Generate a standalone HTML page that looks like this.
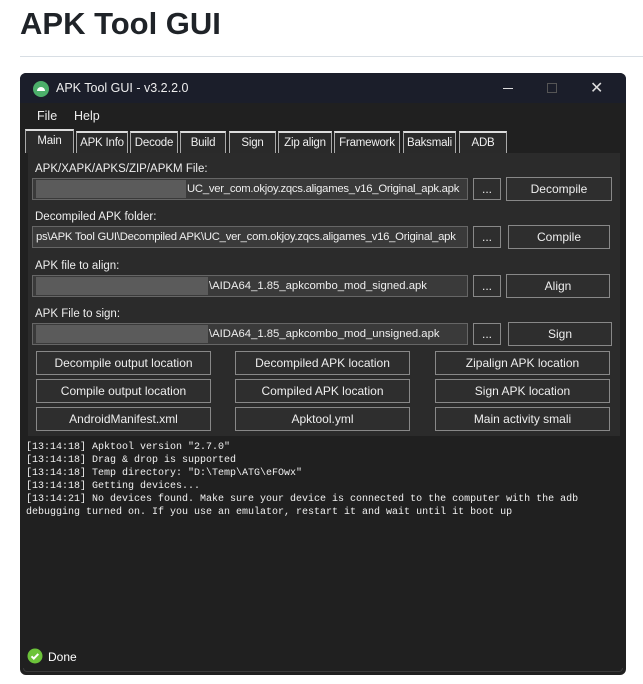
<!DOCTYPE html>
<html><head><style>
body{margin:0;width:643px;height:684px;background:#fff;font-family:"Liberation Sans",sans-serif;position:relative;overflow:hidden}
.a{position:absolute}
h1{position:absolute;left:20px;top:6px;margin:0;font-size:31px;font-weight:bold;color:#1f2328}
.hr{left:20px;top:56px;width:623px;height:1px;background:#d8dee4}
.win{left:20px;top:73px;width:606px;height:602px;background:#202020;border-radius:6px;overflow:hidden;color:#eee;font-size:12px}
.tb{left:0;top:0;width:606px;height:30px;background:#1b1e2a}
.tab{position:absolute;top:58px;height:22px;border:1px solid #aaa;border-bottom:none;background:#2a2a2a;color:#eee;font-size:11.5px;text-align:center;line-height:21px;box-sizing:border-box;border-top:2px solid #ddd;white-space:nowrap;letter-spacing:-0.2px}
.panel{left:8px;top:80px;width:592px;height:283px;background:#2b2b2b}
.lbl{position:absolute;font-size:11.5px;color:#eee}
.in{position:absolute;height:22px;background:#3a3a3a;border:1px solid #666;box-sizing:border-box;font-size:11.3px;line-height:20px;color:#eee;white-space:nowrap;overflow:hidden}
.blur{position:absolute;top:1px;height:18px;background:#5b5b5b}
.btn{position:absolute;background:#2e2e2e;border:1px solid #888;box-sizing:border-box;text-align:center;font-size:12px;color:#eee}
.log{left:6px;top:368px;font-family:"Liberation Mono",monospace;font-size:10px;line-height:13px;color:#f0f0f0;white-space:pre}
</style></head><body>
<h1>APK Tool GUI</h1>
<div class="a hr"></div>
<div class="a win">
 <div class="a tb"></div>
 <svg class="a" style="left:13px;top:8px" width="16" height="16"><circle cx="8" cy="8" r="8" fill="#4caf6a"/><path d="M4 10a4 4 0 0 1 8 0z" fill="#fff"/></svg>
 <div class="a" style="left:36px;top:8px;font-size:12.5px">APK Tool GUI - v3.2.2.0</div>
 <div class="a" style="left:483px;top:15px;width:10px;height:1px;background:#ddd"></div>
 <div class="a" style="left:527px;top:10px;width:8px;height:8px;border:1px solid #555"></div>
 <div class="a" style="left:570px;top:5px;font-size:16px;color:#ddd">✕</div>
 <div class="a" style="left:17px;top:36px;font-size:12.5px">File</div>
 <div class="a" style="left:54px;top:36px;font-size:12.5px">Help</div>
 <div class="tab" style="left:5px;width:49px;top:56px;height:24px;background:#2b2b2b">Main</div>
 <div class="tab" style="left:56px;width:52px">APK Info</div>
 <div class="tab" style="left:110px;width:48px">Decode</div>
 <div class="tab" style="left:160px;width:46px">Build</div>
 <div class="tab" style="left:209px;width:47px">Sign</div>
 <div class="tab" style="left:258px;width:54px">Zip align</div>
 <div class="tab" style="left:314px;width:66px">Framework</div>
 <div class="tab" style="left:383px;width:53px">Baksmali</div>
 <div class="tab" style="left:439px;width:48px">ADB</div>
 <div class="a panel"></div>
 <div class="lbl" style="left:15px;top:90px">APK/XAPK/APKS/ZIP/APKM File:</div>
 <div class="in" style="left:12px;top:105px;width:436px"><div class="blur" style="left:3px;width:150px"></div><span style="position:absolute;left:154px;letter-spacing:-0.25px">UC_ver_com.okjoy.zqcs.aligames_v16_Original_apk.apk</span></div>
 <div class="btn" style="left:453px;top:105px;width:28px;height:22px;line-height:20px">...</div>
 <div class="btn" style="left:486px;top:104px;width:106px;height:24px;line-height:22px">Decompile</div>
 <div class="lbl" style="left:15px;top:138px">Decompiled APK folder:</div>
 <div class="in" style="left:12px;top:153px;width:436px;padding-left:3px;letter-spacing:-0.25px">ps\APK Tool GUI\Decompiled APK\UC_ver_com.okjoy.zqcs.aligames_v16_Original_apk</div>
 <div class="btn" style="left:453px;top:153px;width:28px;height:22px;line-height:20px">...</div>
 <div class="btn" style="left:488px;top:152px;width:102px;height:24px;line-height:22px">Compile</div>
 <div class="lbl" style="left:15px;top:187px">APK file to align:</div>
 <div class="in" style="left:12px;top:202px;width:436px"><div class="blur" style="left:3px;width:172px"></div><span style="position:absolute;left:176px">\AIDA64_1.85_apkcombo_mod_signed.apk</span></div>
 <div class="btn" style="left:453px;top:202px;width:28px;height:22px;line-height:20px">...</div>
 <div class="btn" style="left:486px;top:201px;width:104px;height:24px;line-height:22px">Align</div>
 <div class="lbl" style="left:15px;top:235px">APK File to sign:</div>
 <div class="in" style="left:12px;top:250px;width:436px"><div class="blur" style="left:3px;width:172px"></div><span style="position:absolute;left:176px">\AIDA64_1.85_apkcombo_mod_unsigned.apk</span></div>
 <div class="btn" style="left:453px;top:250px;width:28px;height:22px;line-height:20px">...</div>
 <div class="btn" style="left:488px;top:249px;width:104px;height:24px;line-height:22px">Sign</div>
 <div class="btn" style="left:16px;top:278px;width:175px;height:24px;line-height:22px">Decompile output location</div>
 <div class="btn" style="left:215px;top:278px;width:175px;height:24px;line-height:22px">Decompiled APK location</div>
 <div class="btn" style="left:415px;top:278px;width:175px;height:24px;line-height:22px">Zipalign APK location</div>
 <div class="btn" style="left:16px;top:306px;width:175px;height:24px;line-height:22px">Compile output location</div>
 <div class="btn" style="left:215px;top:306px;width:175px;height:24px;line-height:22px">Compiled APK location</div>
 <div class="btn" style="left:415px;top:306px;width:175px;height:24px;line-height:22px">Sign APK location</div>
 <div class="btn" style="left:16px;top:334px;width:175px;height:24px;line-height:22px">AndroidManifest.xml</div>
 <div class="btn" style="left:215px;top:334px;width:175px;height:24px;line-height:22px">Apktool.yml</div>
 <div class="btn" style="left:415px;top:334px;width:175px;height:24px;line-height:22px">Main activity smali</div>
 <div class="a log">[13:14:18] Apktool version "2.7.0"
[13:14:18] Drag &amp; drop is supported
[13:14:18] Temp directory: "D:\Temp\ATG\eFOwx"
[13:14:18] Getting devices...
[13:14:21] No devices found. Make sure your device is connected to the computer with the adb
debugging turned on. If you use an emulator, restart it and wait until it boot up</div>
 <div class="a" style="left:3px;top:595px;width:598px;height:3px;border:1px solid #3a3a3a;border-top:none;border-radius:0 0 5px 5px"></div>
 <svg class="a" style="left:7px;top:575px" width="16" height="16"><circle cx="8" cy="8" r="7.5" fill="#6cc33a"/><path d="M4.5 8.3l2.3 2.3 4.5-4.7" stroke="#fff" stroke-width="2" fill="none"/></svg>
 <div class="a" style="left:28px;top:577px;font-size:12px;color:#fff">Done</div>
</div>
</body></html>
